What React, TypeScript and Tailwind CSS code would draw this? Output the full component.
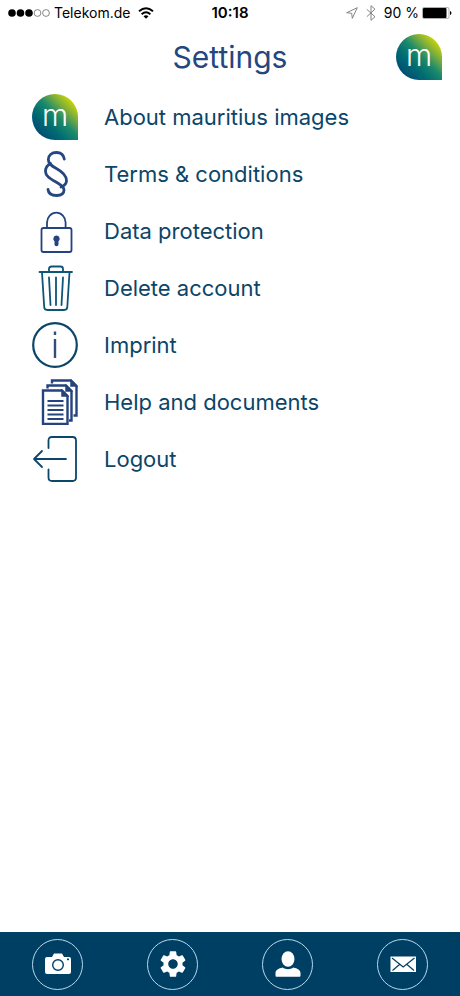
import React from 'react';

function Logo() {
  return (
    <svg viewBox="0 0 46 46" className="w-[46px] h-[46px]" aria-hidden="true">
      <defs>
        <linearGradient id="drop" x1="0.12" y1="0.88" x2="0.88" y2="0.12">
          <stop offset="0" stopColor="#004a74" />
          <stop offset="0.3" stopColor="#006c72" />
          <stop offset="0.55" stopColor="#1c8a6c" />
          <stop offset="0.78" stopColor="#82b03a" />
          <stop offset="1" stopColor="#d0d800" />
        </linearGradient>
      </defs>
      <path d="M46 46H23A23 23 0 1 1 46 23Z" fill="url(#drop)" />
      <text x="23" y="32" textAnchor="middle" fontSize="30" fontFamily="Inter, sans-serif" fontWeight="300" fill="#fff">
        m
      </text>
    </svg>
  );
}

function SectionIcon() {
  return (
    <svg viewBox="0 0 46 46" className="w-[46px] h-[46px]" fill="none" stroke="#24477f" strokeWidth="2.800" strokeLinecap="round" aria-hidden="true">
      <path d="M32.300 8C31.500 3.500 28.500 1.500 24.500 1.500C19.500 1.500 16.300 4.500 16.300 8.500C16.300 13 20 15 24 17.200C30 20.500 34.500 24 34.500 29.500C34.500 33 32 35 29 36" />
      <path d="M18.500 12.500C15.500 14 13.500 17 13.500 20.500C13.500 25 18 27.500 24 31C28 33.500 32 35 32 39C32 43 28.500 44.500 24.500 44.500C20 44.500 16.500 43 16 38.500" />
    </svg>
  );
}

function LockIcon() {
  return (
    <svg viewBox="0 0 46 46" className="w-[46px] h-[46px]" fill="none" stroke="#24437f" strokeWidth="1.8" aria-hidden="true">
      <rect x="9.5" y="20" width="30" height="24" rx="2" />
      <path d="M15 20v-5.5a9.3 9.8 0 0 1 18.6 0V20" />
      <path d="M24.5 27.5a3.2 3.2 0 0 0-2 5.700v3a2 2 0 0 0 4 0v-3a3.200 3.200 0 0 0-2-5.700z" fill="#24437f" stroke="none" />
    </svg>
  );
}

function TrashIcon() {
  return (
    <svg viewBox="0 0 46 46" className="w-[46px] h-[46px]" fill="none" stroke="#0d567a" strokeWidth="1.800" strokeLinecap="round" aria-hidden="true">
      <path d="M7.500 7h32.500M17 6.500V4q0-2.500 2.500-2.500h9Q31 1.500 31 4v2.500" />
      <path d="M10 7.500l2.200 34.500q.2 3 3 3h17.100q2.800 0 3-3L37.500 7.500" />
      <path d="M17 12.500l1.500 27.500M24 12.500V40M31 12.500L29.500 40" />
    </svg>
  );
}

function InfoIcon() {
  return (
    <svg viewBox="0 0 46 46" className="w-[46px] h-[46px]" fill="none" stroke="#0b4568" aria-hidden="true">
      <circle cx="23" cy="23" r="21.800" strokeWidth="2.200" />
      <path d="M23 17v19M23 9.500v3.500" stroke="#315078" strokeWidth="2.400" />
    </svg>
  );
}

function DocumentsIcon() {
  return (
    <svg viewBox="0 0 46 46" className="w-[46px] h-[46px]" fill="none" stroke="#24437f" strokeWidth="2.400" aria-hidden="true">
      <path d="M20 4.500V1.500h19L44.500 7v29.500H41.500" />
      <path d="M39 1.500V7h5.500z" fill="#24437f" strokeWidth="1.500" />
      <path d="M15.500 9.500V6.500h18.500L39.500 12v29.500H37" />
      <path d="M34 6.500V12h5.500z" fill="#24437f" strokeWidth="1.500" />
      <path d="M11 11.500H30l5.500 5.500v28H11z" />
      <path d="M30 11.500v5.500h5.500z" fill="#24437f" strokeWidth="1.500" />
      <path d="M15.500 22h16M15.500 26.500h16M15.500 31h16M15.500 35.500h16M15.500 40h16" strokeWidth="1.800" />
    </svg>
  );
}

function LogoutIcon() {
  return (
    <svg viewBox="0 0 46 46" className="w-[46px] h-[46px]" fill="none" stroke="#0d466b" strokeWidth="1.800" strokeLinecap="round" strokeLinejoin="round" aria-hidden="true">
      <path d="M16.500 12V4.500q0-3.500 3.500-3.500h20.500Q44 1 44 4.500v37q0 3.500-3.500 3.500H20q-3.500 0-3.500-3.500V33.500" />
      <path d="M34 23H2M10 15l-8 8 8 8" />
    </svg>
  );
}

const items = [
  { label: 'About mauritius images', icon: <Logo /> },
  { label: 'Terms & conditions', icon: <SectionIcon /> },
  { label: 'Data protection', icon: <LockIcon /> },
  { label: 'Delete account', icon: <TrashIcon /> },
  { label: 'Imprint', icon: <InfoIcon /> },
  { label: 'Help and documents', icon: <DocumentsIcon /> },
  { label: 'Logout', icon: <LogoutIcon /> },
];

const tabs = [
  {
    label: 'Camera',
    icon: (
      <svg viewBox="0 0 28 28" className="w-7 h-7" aria-hidden="true">
        <path d="M3 7h5l2-3.500h8L20 7h5q2 0 2 2v13q0 2-2 2H3q-2 0-2-2V9q0-2 2-2z" fill="#fff" />
        <circle cx="14" cy="15" r="5.300" fill="none" stroke="#003f64" strokeWidth="1.400" />
        <rect x="23" y="8.500" width="2" height="1.700" fill="#003f64" />
      </svg>
    ),
  },
  {
    label: 'Settings',
    icon: (
      <svg viewBox="1.400 1.400 21.200 21.200" className="w-7 h-7" aria-hidden="true">
        <path
          d="M19.140 12.940c.04-.3.060-.61.060-.94 0-.32-.02-.64-.07-.94l2.030-1.580c.18-.14.230-.41.120-.61l-1.920-3.320c-.12-.22-.37-.29-.59-.22l-2.390.96c-.5-.38-1.030-.7-1.620-.94l-.36-2.540c-.04-.24-.24-.41-.48-.41h-3.840c-.24 0-.43.17-.47.41l-.36 2.540c-.59.24-1.130.57-1.620.94l-2.390-.96c-.22-.08-.47 0-.59.22L2.740 8.870c-.12.210-.08.470.12.610l2.030 1.580c-.05.300-.09.630-.09.940s.02.640.07.940l-2.030 1.580c-.18.140-.23.410-.12.610l1.920 3.320c.12.220.37.290.59.220l2.390-.96c.5.380 1.030.700 1.620.940l.36 2.540c.05.240.24.410.48.410h3.840c.24 0 .44-.17.470-.41l.36-2.540c.59-.24 1.130-.56 1.620-.94l2.390.96c.22.080.47 0 .59-.22l1.920-3.320c.12-.22.070-.47-.12-.61l-2.010-1.580zM12 15.600c-1.980 0-3.600-1.620-3.600-3.600s1.620-3.600 3.600-3.600 3.600 1.620 3.600 3.600-1.620 3.600-3.600 3.600z"
          fill="#fff"
        />
      </svg>
    ),
  },
  {
    label: 'Profile',
    icon: (
      <svg viewBox="0 0 28 28" className="w-7 h-7" fill="#fff" aria-hidden="true">
        <ellipse cx="14" cy="9" rx="6.500" ry="7.800" />
        <path d="M1.500 26V23c0-3 3-4.500 7-5.500 3.500 2.300 7.500 2.300 11 0 4 1 7 2.500 7 5.500v3q0 .8-1 .8h-23q-1 0-1-.8z" />
      </svg>
    ),
  },
  {
    label: 'Messages',
    icon: (
      <svg viewBox="0 0 28 28" className="w-7 h-7" aria-hidden="true">
        <rect x="1.500" y="6.500" width="25.500" height="15.500" fill="#fff" />
        <path d="M3 8l11.200 9L25.500 8M3.500 20.500l7-6M25 20.500l-7-6" fill="none" stroke="#003f64" strokeWidth="1.200" />
      </svg>
    ),
  },
];

function StatusBar() {
  return (
    <div className="grid grid-cols-[1fr_auto_1fr] items-center h-[26px] px-2 text-sm leading-5 text-black">
      <div className="flex items-center">
        <svg viewBox="0 0 42 10" className="w-[42px] h-[10px]" aria-hidden="true">
          <circle cx="4" cy="5" r="3.800" />
          <circle cx="12.500" cy="5" r="3.800" />
          <circle cx="21" cy="5" r="3.800" />
          <circle cx="29.500" cy="5" r="3.400" fill="none" stroke="#555" strokeWidth="0.700" />
          <circle cx="38" cy="5" r="3.400" fill="none" stroke="#555" strokeWidth="0.700" />
        </svg>
        <span className="ml-1">Telekom.de</span>
        <svg viewBox="0 0 16 12" className="w-4 h-3 ml-2" fill="none" stroke="#000" strokeWidth="1.900" aria-hidden="true">
          <path d="M1 4.300q7-6 14 0M3.600 7.200q4.400-3.700 8.800 0" />
          <path d="M8 11.800L5.500 9.300q2.500-2 5 0z" fill="#000" stroke="none" />
        </svg>
      </div>
      <span className="text-[15px] font-semibold">10:18</span>
      <div className="flex items-center justify-end">
        <svg viewBox="0 0 12 12" className="w-3 h-3" fill="none" stroke="#777" strokeWidth="0.900" aria-hidden="true">
          <path d="M11.300.7L.7 5.700l5 .6.600 5z" />
        </svg>
        <svg viewBox="0 0 10 16" className="w-[10px] h-4 ml-2" fill="none" stroke="#777" strokeWidth="0.900" aria-hidden="true">
          <path d="M.8 4.300l8.200 7.500L5 15.300V.7L9 4.200.8 11.700" />
        </svg>
        <span className="ml-2">90 %</span>
        <svg viewBox="0 0 30 12" className="w-[30px] h-3 ml-[3px]" aria-hidden="true">
          <rect x="0.500" y="0.500" width="26.500" height="11" rx="1.500" fill="#fff" stroke="#999" strokeWidth="0.800" />
          <rect x="1" y="1" width="23.500" height="10" rx="1" />
          <path d="M28 4q1.500.5 1.500 2T28 8z" />
        </svg>
      </div>
    </div>
  );
}

export default function App() {
  return (
    <div className="min-h-screen flex flex-col bg-white font-['Inter',sans-serif]">
      <StatusBar />
      <header className="grid grid-cols-[1fr_auto_1fr] items-center h-[62px] px-[18px]">
        <h1 className="col-start-2 text-[30px] leading-8 text-[#24477f]">Settings</h1>
        <div className="justify-self-end">
          <Logo />
        </div>
      </header>

      <main className="flex-1">
        <ul>
          {items.map((item) => (
            <li key={item.label}>
              <button type="button" className="flex items-center w-full h-[57px] pl-8 gap-[26px] text-left text-[22px] leading-7 text-[#0b4568]">
                {item.icon}
                <span>{item.label}</span>
              </button>
            </li>
          ))}
        </ul>
      </main>

      <nav className="flex items-center h-16 bg-[#003f64]">
        {tabs.map((tab) => (
          <div key={tab.label} className="flex-1 flex justify-center">
            <button
              type="button"
              aria-label={tab.label}
              className="flex items-center justify-center w-[51px] h-[51px] rounded-full border border-[#b9d8ea]"
            >
              {tab.icon}
            </button>
          </div>
        ))}
      </nav>
    </div>
  );
}
